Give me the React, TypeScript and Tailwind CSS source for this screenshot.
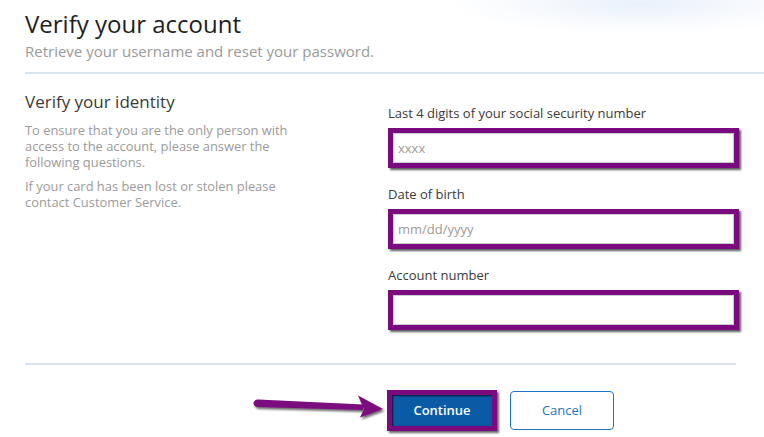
import { useState } from "react";

const font = { fontFamily: '"Open Sans", "Liberation Sans", sans-serif' };

function Field({ label, placeholder }: { label: string; placeholder?: string }) {
  const [value, setValue] = useState("");
  return (
    <div className="flex flex-col">
      <label className="text-[13px] leading-[18px] text-[#3a3a3a]">{label}</label>
      <div className="mt-[6px] h-[40px] w-[351px] border-[5px] border-[#7b0a7e] bg-white shadow-[2px_2px_2px_rgba(0,0,0,0.65)]">
        <input
          className="h-full w-full border border-[#ccc] bg-white px-[4px] text-[13px] text-[#555] outline-none placeholder:text-[#a09a93]"
          placeholder={placeholder}
          value={value}
          onChange={(e) => setValue(e.target.value)}
        />
      </div>
    </div>
  );
}

function Arrow() {
  return (
    <svg width="136" height="30" viewBox="0 0 136 30" className="absolute left-[-136px] top-[2px]" aria-hidden="true">
      <defs>
        <filter id="sh" x="-10%" y="-30%" width="120%" height="160%">
          <feDropShadow dx="1.5" dy="2" stdDeviation="1" floodColor="#000" floodOpacity="0.6" />
        </filter>
      </defs>
      <g filter="url(#sh)" fill="#7b0a7e">
        <path d="M7 7.5 C4 7.5 2.5 9.5 2.5 11.3 C2.5 13.3 4 15 7 15 L112 18 L112 12.5 Z" />
        <path d="M107 3.5 L132 17 L109 25.5 L113 17 Z" />
      </g>
    </svg>
  );
}

export default function App() {
  return (
    <div className="min-h-[437px] w-[764px] overflow-hidden bg-white" style={font}>
      <div className="bg-[radial-gradient(ellipse_190px_30px_at_640px_4px,#e9f1fb,#f6f9fd_55%,transparent)]">
        <div className="pl-[25px] pt-[8px]">
          <h1 className="text-[24px] leading-[32px] text-[#1e1e1e]">Verify your account</h1>
          <p className="mt-[1px] text-[15px] leading-[20px] text-[#9a9a9a]">
            Retrieve your username and reset your password.
          </p>
        </div>
        <div className="ml-[25px] mt-[11px] h-[2px] bg-[#dae3f0]" />
      </div>

      <div className="flex pl-[25px]">
        <div className="w-[363px] pt-[17px]">
          <h2 className="text-[17px] leading-[22px] text-[#3a3a3a]">Verify your identity</h2>
          <p className="mt-[9px] w-[288px] text-[12.9px] leading-[16px] text-[#9a9a9a]">
            To ensure that you are the only person with access to the account, please answer the following questions.
          </p>
          <p className="mt-[8px] w-[288px] text-[12.9px] leading-[16px] text-[#9a9a9a]">
            If your card has been lost or stolen please contact Customer Service.
          </p>
        </div>
        <div className="flex flex-col gap-[17px] pt-[30px]">
          <Field label="Last 4 digits of your social security number" placeholder="xxxx" />
          <Field label="Date of birth" placeholder="mm/dd/yyyy" />
          <Field label="Account number" />
        </div>
      </div>

      <div className="ml-[25px] mt-[33px] h-[2px] w-[711px] bg-[#dae3f0]" />

      <div className="mt-[25px] flex items-start gap-[13px] pl-[387px]">
        <div className="relative">
          <Arrow />
          <button
            type="button"
            className="h-[41px] w-[110px] border-[5px] border-[#7b0a7e] bg-[#0a5aa5] text-[13px] font-semibold text-white shadow-[2px_2px_2px_rgba(0,0,0,0.6),inset_1px_1px_2px_rgba(0,0,0,0.7)]"
          >
            Continue
          </button>
        </div>
        <button
          type="button"
          className="mt-[1px] h-[39px] w-[104px] rounded-[4px] border border-[#1f74c4] bg-white text-[13px] text-[#1f74c4]"
        >
          Cancel
        </button>
      </div>
    </div>
  );
}
